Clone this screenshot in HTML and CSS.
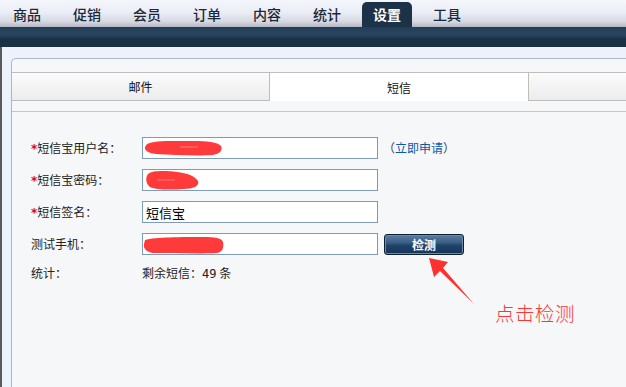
FILE: index.html
```html
<!DOCTYPE html>
<html lang="zh">
<head>
<meta charset="utf-8">
<title>设置 - 短信</title>
<link rel="stylesheet" href="styles.css">
</head>
<body>
<nav class="topnav">
  <a class="nav-item">商品</a>
  <a class="nav-item">促销</a>
  <a class="nav-item">会员</a>
  <a class="nav-item">订单</a>
  <a class="nav-item">内容</a>
  <a class="nav-item">统计</a>
  <a class="nav-item active">设置</a>
  <a class="nav-item">工具</a>
</nav>
<div class="band"></div>
<main class="main">
  <section class="panel">
    <div class="tabs">
      <div class="tab">邮件</div>
      <div class="tab current">短信</div>
      <div class="tab rest"></div>
    </div>
    <div class="divider"></div>
    <form class="form">
      <div class="row">
        <label class="label"><span class="req">*</span>短信宝用户名：</label>
        <span class="field">
          <input class="input" type="text" value="">
          <svg class="blob" width="80" height="18" viewBox="0 0 80 18"><path d="M3 5 C10 1 30 2 50 2 C62 2 74 3 77 7 C79 11 76 15 68 16 C52 17 30 16 12 15 C4 14 0 11 1 8 Z" fill="#ff3a3a"/><path d="M36 8 L54 8" stroke="#ff8080" stroke-width="1"/></svg>
        </span>
        <a class="apply">（<span class="link">立即申请</span>）</a>
      </div>
      <div class="row">
        <label class="label"><span class="req">*</span>短信宝密码：</label>
        <span class="field">
          <input class="input" type="password" value="">
          <svg class="blob b2" width="56" height="21" viewBox="0 0 56 21"><path d="M3 4 C8 0 22 1 32 2 C42 3 50 6 53 11 C55 16 48 19 38 19 C26 20 12 20 5 17 C1 14 0 8 3 4 Z" fill="#ff3a3a"/><path d="M12 10 L30 10" stroke="#ff7a7a" stroke-width="1"/></svg>
        </span>
      </div>
      <div class="row">
        <label class="label"><span class="req">*</span>短信签名：</label>
        <span class="field">
          <input class="input" type="text" value="短信宝">
        </span>
      </div>
      <div class="row">
        <label class="label">测试手机：</label>
        <span class="field">
          <input class="input" type="text" value="">
          <svg class="blob b4" width="82" height="18" viewBox="0 0 82 18"><path d="M2 4 C12 1 40 1 60 1 C72 1 79 2 80 6 C81 11 80 16 74 17 C56 18 30 17 10 17 C3 16 0 12 1 8 Z" fill="#ff3a3a"/></svg>
        </span>
        <button class="btn" type="button">检测</button>
      </div>
      <div class="row stat">
        <span class="label">统计：</span>
        <span class="value">剩余短信：<span class="num">49</span> 条</span>
      </div>
    </form>
  </section>
</main>
<svg class="arrow" width="60" height="60" viewBox="0 0 60 60"><polygon points="1,1 20,5 15,11 46,47 12,14 6,20" fill="#ff3030"/></svg>
<div class="note">点击检测</div>
</body>
</html>
```
FILE: styles.css
```css
* { box-sizing: border-box; }
html, body { margin: 0; padding: 0; }
body {
  width: 626px;
  height: 387px;
  overflow: hidden;
  position: relative;
  background: #edf1fa;
  font-family: "Noto Sans CJK SC", "Noto Sans", sans-serif;
  font-size: 12px;
  color: #222;
}
.topnav {
  height: 27px;
  display: flex;
  align-items: flex-end;
  gap: 10px;
  padding-left: 2px;
  background: linear-gradient(#f4f6fc 0%, #eceef7 45%, #d6d8e2 80%, #b3b5c2 100%);
}
.nav-item {
  width: 50px;
  height: 25px;
  display: flex;
  align-items: center;
  justify-content: center;
  padding-bottom: 2px;
  font-size: 14px;
  font-weight: 500;
  color: #1c2738;
  text-decoration: none;
}
.nav-item.active {
  background: #1b3248;
  color: #fff;
  font-weight: 700;
  border-radius: 5px 5px 0 0;
}
.band {
  height: 20px;
  background: linear-gradient(#223c53 0%, #284660 30%, #243f58 50%, #1b3246 55%, #1a3044 100%);
}
.main {
  border-left: 2px solid #5a5a5a;
  padding: 11px 0 0 9px;
  height: 340px;
}
.panel {
  border-top: 1px solid #a9b9c9;
  border-left: 1px solid #a9b9c9;
  border-top-left-radius: 5px;
  background: #f6f7f9;
  height: 100%;
  padding-top: 13px;
}
.tabs {
  display: flex;
  height: 29px;
}
.tab {
  width: 258px;
  display: flex;
  align-items: center;
  justify-content: center;
  border-top: 1px solid #bdbdbd;
  border-bottom: 1px solid #bdbdbd;
  border-right: 1px solid #bdbdbd;
  background: linear-gradient(#fbfbfb, #ececec);
  color: #111;
  font-size: 12px;
}
.tab.current {
  width: 258px;
  background: #fff;
  border-bottom: 0;
  border-right: 0;
}
.tab.rest {
  flex: 1;
  border-left: 1px solid #c2bdb4;
  border-right: 0;
}
.divider {
  margin-top: 10px;
  height: 1px;
  background: #c6c6c6;
}
.form {
  padding: 25px 0 0 19px;
  display: flex;
  flex-direction: column;
  gap: 10px;
}
.row {
  display: flex;
  align-items: center;
  height: 22px;
}
.label {
  width: 111px;
  color: #222;
  white-space: nowrap;
  padding-bottom: 2px;
}
.req {
  color: #e00;
  font-weight: 700;
  font-family: "DejaVu Sans", sans-serif;
  font-size: 12px;
}
.field {
  position: relative;
  display: inline-block;
}
.input {
  width: 236px;
  height: 22px;
  border: 1px solid #809bb8;
  background: #fff;
  padding: 1px 3px 0;
  font-family: "Noto Sans CJK SC", sans-serif;
  font-size: 13px;
  color: #000;
  outline: none;
  display: block;
}
.blob {
  position: absolute;
  left: 2px;
  top: 2px;
}
.blob.b2 { left: 3px; top: 1px; }
.blob.b4 { left: 1px; top: 3px; }
.apply {
  margin-left: 5px;
  color: #444;
  text-decoration: none;
  padding-bottom: 2px;
}
.link { color: #0a5aa8; }
.btn {
  margin-left: 6px;
  width: 80px;
  height: 21px;
  border: 1px solid #0d1f31;
  border-radius: 3px;
  background: linear-gradient(#5a7ea2 0%, #3a5f85 40%, #1f4269 55%, #163557 100%);
  color: #fff;
  font-family: "Noto Sans CJK SC", sans-serif;
  font-size: 12px;
  font-weight: 700;
  padding: 0;
  box-shadow: inset 0 0 0 1px #6a8aac;
}
.row.stat { height: 16px; }
.value { color: #222; padding-bottom: 2px; }
.num { font-family: "DejaVu Sans Mono", monospace; font-size: 12px; }
.arrow {
  position: absolute;
  left: 428px;
  top: 257px;
}
.note {
  position: absolute;
  left: 495px;
  top: 298px;
  font-size: 19.5px;
  font-weight: 300;
  color: #ff3434;
  letter-spacing: 0.5px;
}
```
